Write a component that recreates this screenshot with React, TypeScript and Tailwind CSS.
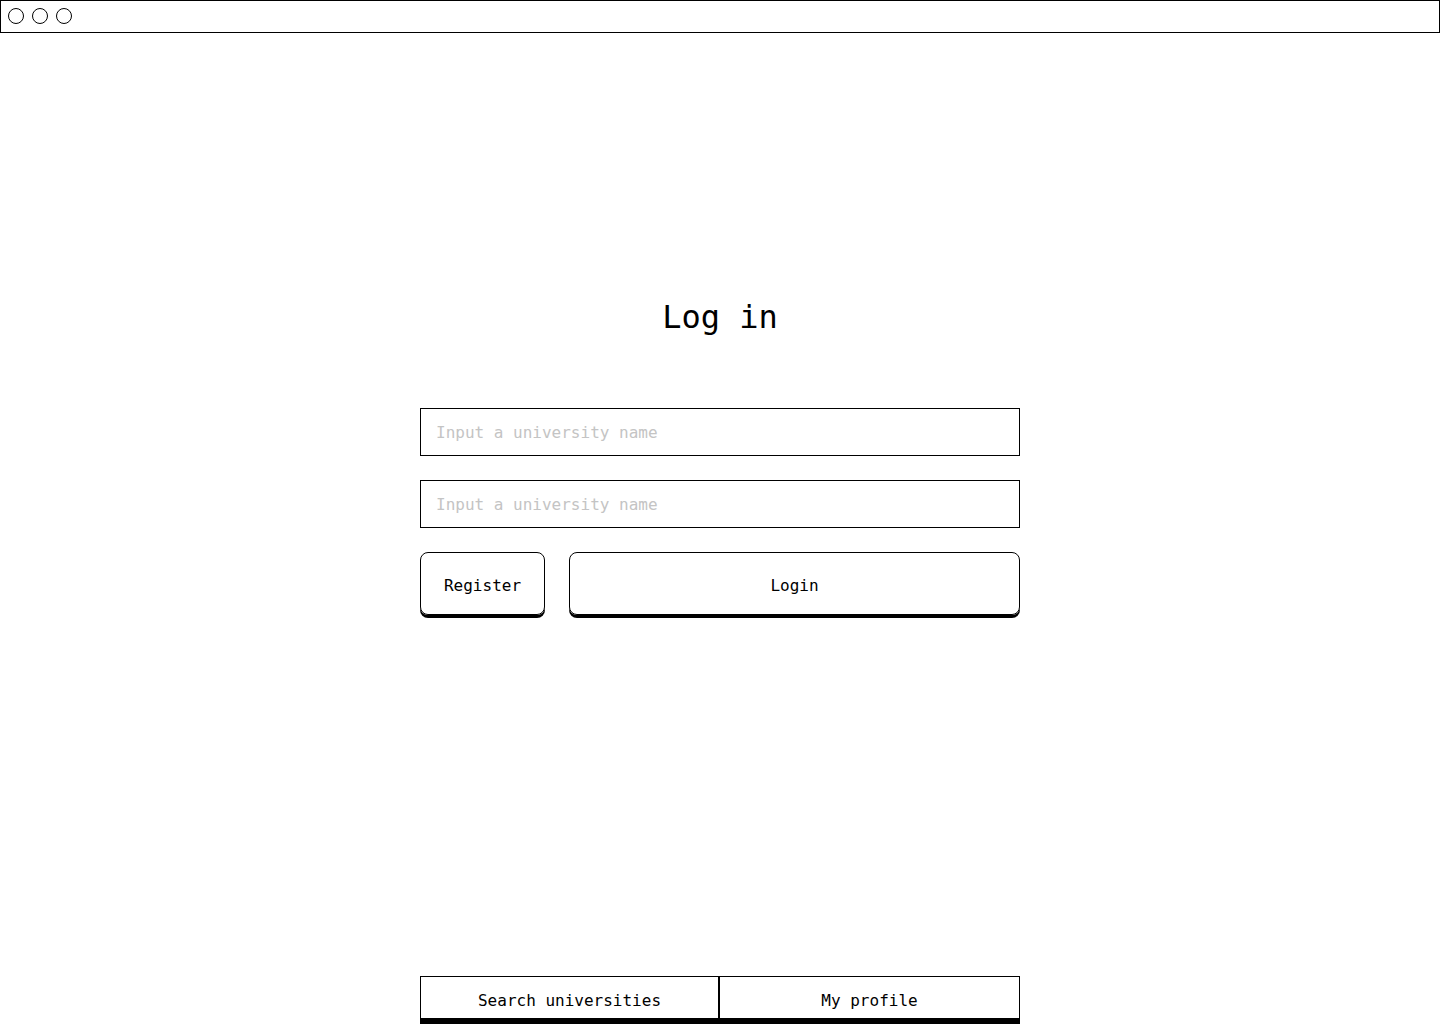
const MONO = "font-['DejaVu_Sans_Mono',monospace]";

function WindowBar() {
  return (
    <div className="flex h-[33px] items-center gap-2 border border-black px-[7px] pb-px">
      <span className="h-4 w-4 rounded-full border border-black" />
      <span className="h-4 w-4 rounded-full border border-black" />
      <span className="h-4 w-4 rounded-full border border-black" />
    </div>
  );
}

export default function App() {
  return (
    <div className={`flex h-[1024px] flex-col overflow-hidden bg-white text-black ${MONO}`}>
      <WindowBar />

      <main className="mx-auto flex w-[600px] flex-1 flex-col">
        <h1 className="mt-[264px] text-center text-[32px] leading-[40px]">Log in</h1>

        <form className="mt-[71px] flex flex-col gap-6" onSubmit={(e) => e.preventDefault()}>
          <input
            type="text"
            placeholder="Input a university name"
            className="h-12 w-full border border-black px-[15px] text-base outline-none placeholder:text-[#c4c4c4]"
          />
          <input
            type="text"
            placeholder="Input a university name"
            className="h-12 w-full border border-black px-[15px] text-base outline-none placeholder:text-[#c4c4c4]"
          />
          <div className="flex gap-6">
            <button
              type="button"
              className="h-[63px] w-[125px] rounded-lg border border-black pt-1 text-base shadow-[0_3px_0_#000]"
            >
              Register
            </button>
            <button
              type="submit"
              className="h-[63px] flex-1 rounded-lg border border-black pt-1 text-base shadow-[0_3px_0_#000]"
            >
              Login
            </button>
          </div>
        </form>

        <nav className="mt-auto grid h-12 grid-cols-2 border-x border-t border-b-[6px] border-black">
          <button type="button" className="border-r-2 border-black pt-[6px] text-base">
            Search universities
          </button>
          <button type="button" className="pt-[6px] text-base">
            My profile
          </button>
        </nav>
      </main>
    </div>
  );
}
